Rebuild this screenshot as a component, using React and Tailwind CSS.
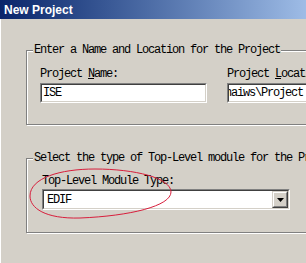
import React from "react";

const mono = { fontFamily: '"Liberation Mono", "Courier New", monospace' };

function Sunken({ className = "", children }) {
  return (
    <div
      className={
        "border-t border-l border-t-[#808080] border-l-[#808080] border-b border-r border-b-white border-r-white " +
        className
      }
    >
      <div className="h-full w-full border-t border-l border-t-[#404040] border-l-[#404040] border-b border-r border-b-[#d4d0c8] border-r-[#d4d0c8] bg-white overflow-hidden">
        {children}
      </div>
    </div>
  );
}

export default function App() {
  return (
    <div
      className="relative w-[306px] h-[263px] overflow-hidden bg-[#d4d0c8] text-[12px] tracking-[-1.2px] text-black"
      style={mono}
    >
      <div
        className="h-[19px] bg-gradient-to-r from-[#0a246a] to-[#9ebce6] flex items-center pl-[4px] text-white font-bold text-[12px] tracking-normal"
        style={{ fontFamily: '"Liberation Sans", Arial, sans-serif' }}
      >
        New Project
      </div>

      <div className="h-[244px] border-l border-l-white pl-[25px] pt-[31px]">
        {/* Group 1 */}
        <div className="w-[340px] h-[75px] border border-[#808080] shadow-[inset_1px_1px_0_#fff,1px_1px_0_#fff]">
          <div className="-mt-[8px] ml-[6px] w-fit bg-[#d4d0c8] px-[1px] leading-[14px] whitespace-nowrap">
            Enter a Name and Location for the Project
          </div>
          <div className="flex gap-[20px] pl-[13px] mt-[10px]">
            <div className="w-[167px] shrink-0">
              <div className="leading-[14px] whitespace-nowrap">
                Project <span className="underline">N</span>ame:
              </div>
              <Sunken className="mt-[2px] h-[20px]">
                <div className="h-full flex items-center pl-[1px] whitespace-nowrap">ISE</div>
              </Sunken>
            </div>
            <div className="w-[120px] shrink-0">
              <div className="leading-[14px] whitespace-nowrap">
                Project <span className="underline">L</span>ocation:
              </div>
              <Sunken className="mt-[2px] h-[20px]">
                <div className="h-full flex items-center -ml-[4px] whitespace-nowrap">naiws\Project</div>
              </Sunken>
            </div>
          </div>
        </div>

        {/* Group 2 */}
        <div className="mt-[33px] w-[340px] h-[75px] border border-[#808080] shadow-[inset_1px_1px_0_#fff,1px_1px_0_#fff]">
          <div className="-mt-[8px] ml-[6px] w-fit bg-[#d4d0c8] px-[1px] leading-[14px] whitespace-nowrap">
            Select the type of Top-Level module for the Project
          </div>
          <div className="pl-[15px] mt-[9px]">
            <div className="leading-[14px] whitespace-nowrap">Top-Level Module Type:</div>
            <Sunken className="mt-[1px] h-[21px] w-[248px]">
              <div className="h-full flex items-center">
                <div className="flex-1 pl-[3px] whitespace-nowrap">EDIF</div>
                <div className="w-[16px] h-full border-t border-l border-t-[#d4d0c8] border-l-[#d4d0c8] border-b border-r border-b-[#404040] border-r-[#404040] bg-[#d4d0c8]">
                  <div className="h-full w-full border-t border-l border-t-white border-l-white border-b border-r border-b-[#808080] border-r-[#808080] flex items-center justify-center">
                    <svg width="7" height="4" viewBox="0 0 7 4">
                      <path d="M0 0H7L3.5 4Z" fill="#000" />
                    </svg>
                  </div>
                </div>
              </div>
            </Sunken>
          </div>
        </div>
      </div>

      {/* red hand-drawn ellipse annotation */}
      <svg className="absolute left-0 top-0 pointer-events-none" width="306" height="263" viewBox="0 0 306 263">
        <path
          d="M30 196 C30 178 60 169 95 169 C135 169 171 178 171 192 C171 206 130 216 80 218 C45 219 30 208 30 196 Z"
          fill="none"
          stroke="#d81e3c"
          strokeWidth="1"
        />
      </svg>
    </div>
  );
}
